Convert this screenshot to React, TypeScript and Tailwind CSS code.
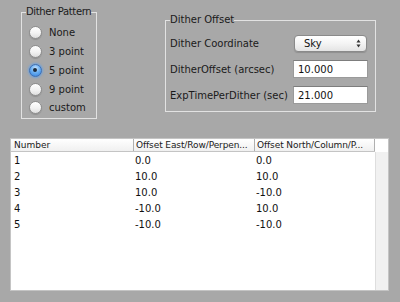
import { ReactNode } from 'react'

const font = { fontFamily: '"DejaVu Sans", "Liberation Sans", sans-serif' }

const patterns = ['None', '3 point', '5 point', '9 point', 'custom']

const rows = [
  ['1', '0.0', '0.0'],
  ['2', '10.0', '10.0'],
  ['3', '10.0', '-10.0'],
  ['4', '-10.0', '10.0'],
  ['5', '-10.0', '-10.0'],
]

function Radio({ checked }: { checked?: boolean }) {
  if (checked) {
    return (
      <span className="flex h-[13px] w-[13px] items-center justify-center rounded-full border border-[#3a6fb8] bg-[radial-gradient(circle_at_50%_30%,#c9e4ff_0%,#6cb0f2_45%,#2f7fdb_100%)] shadow-[0_0_2px_1px_rgba(90,160,240,0.7)]">
        <span className="h-[4px] w-[4px] rounded-full bg-[#1c2a3a]" />
      </span>
    )
  }
  return (
    <span className="h-[13px] w-[13px] rounded-full border border-[#8e8e8e] bg-[linear-gradient(#ffffff,#f2f2f2_55%,#dedede)] shadow-[0_1px_1px_rgba(0,0,0,0.15)]" />
  )
}

function Row({ label, children }: { label: string; children: ReactNode }) {
  return (
    <div className="flex h-[18px] items-center">
      <span className="w-[123px] text-[10px] text-[#1a1a1a]">{label}</span>
      {children}
    </div>
  )
}

function NumberField({ value }: { value: string }) {
  return (
    <div className="flex h-[18px] w-[75px] items-center border border-[#9a9a9a] border-t-[#7d7d7d] bg-white pl-[4px] text-[10px] text-[#111]">
      {value}
    </div>
  )
}

export default function App() {
  return (
    <div className="h-[302px] w-[400px] overflow-hidden bg-[#a8a8a8]" style={font}>
      <div className="flex h-[138px] items-start">
        <fieldset className="ml-[21px] mt-[6px] box-border h-[113px] w-[76px] min-w-0 border border-[#e2e2e2] pl-[4px]">
          <legend className="whitespace-nowrap px-0 text-[10px] leading-[12px] tracking-[-0.35px] text-[#1a1a1a]">
            Dither Pattern
          </legend>
          <div className="pl-[2.5px] pt-[5.5px]">
            {patterns.map((p) => (
              <div key={p} className="flex h-[18.75px] items-center gap-[7.5px]">
                <Radio checked={p === '5 point'} />
                <span className="text-[10px] text-[#1a1a1a]">{p}</span>
              </div>
            ))}
          </div>
        </fieldset>

        <fieldset className="ml-[68px] mt-[14px] box-border h-[98px] w-[211px] border border-[#e2e2e2] pl-[4px]">
          <legend className="px-0 text-[10px] leading-[12px] text-[#1a1a1a]">Dither Offset</legend>
          <div className="flex flex-col gap-[8px] pt-[8px]">
            <Row label="Dither Coordinate">
              <div className="ml-[1px] flex h-[17px] w-[73px] items-center justify-between rounded-[4px] border border-[#8a8a8a] bg-[linear-gradient(#ffffff,#f4f4f4_50%,#e4e4e4)] pl-[9px] pr-[5px] text-[10px] text-[#111] shadow-[0_1px_1px_rgba(0,0,0,0.15)]">
                <span>Sky</span>
                <svg width="5" height="9" viewBox="0 0 5 9">
                  <path d="M2.5 0.5 L4.5 3.5 L0.5 3.5 Z" fill="#333" />
                  <path d="M2.5 8.5 L4.5 5.5 L0.5 5.5 Z" fill="#333" />
                </svg>
              </div>
            </Row>
            <Row label="DitherOffset (arcsec)">
              <NumberField value="10.000" />
            </Row>
            <Row label="ExpTimePerDither (sec)">
              <NumberField value="21.000" />
            </Row>
          </div>
        </fieldset>
      </div>

      <div className="ml-[10px] flex h-[153px] w-[379px] border border-[#c4c4c4] bg-white">
        <div className="flex w-[364px] flex-col">
          <div className="flex h-[13px] border-b border-[#c4c4c4] bg-[linear-gradient(#ffffff,#f0f0f0)] text-[9px] leading-[12px] text-[#1a1a1a]">
            <div className="w-[122px] pl-[3px]">Number</div>
            <div className="w-[121px] overflow-hidden whitespace-nowrap border-l border-[#b0b0b0] pl-[2px] tracking-[-0.1px]">
              Offset East/Row/Perpen...
            </div>
            <div className="w-[121px] overflow-hidden whitespace-nowrap border-x border-[#b0b0b0] pl-[2px] tracking-[-0.1px]">
              Offset North/Column/P...
            </div>
          </div>
          {rows.map((r) => (
            <div key={r[0]} className="flex h-[16px] items-center text-[10px] text-[#111]">
              <div className="w-[122px] pl-[3px]">{r[0]}</div>
              <div className="w-[121px] pl-[2px]">{r[1]}</div>
              <div className="w-[121px] pl-[2px]">{r[2]}</div>
            </div>
          ))}
        </div>
        <div className="flex flex-1 flex-col">
          <div className="h-[13px] bg-white" />
          <div className="flex-1 border-l border-[#dedede] bg-[#f1f1f1]" />
        </div>
      </div>
    </div>
  )
}
